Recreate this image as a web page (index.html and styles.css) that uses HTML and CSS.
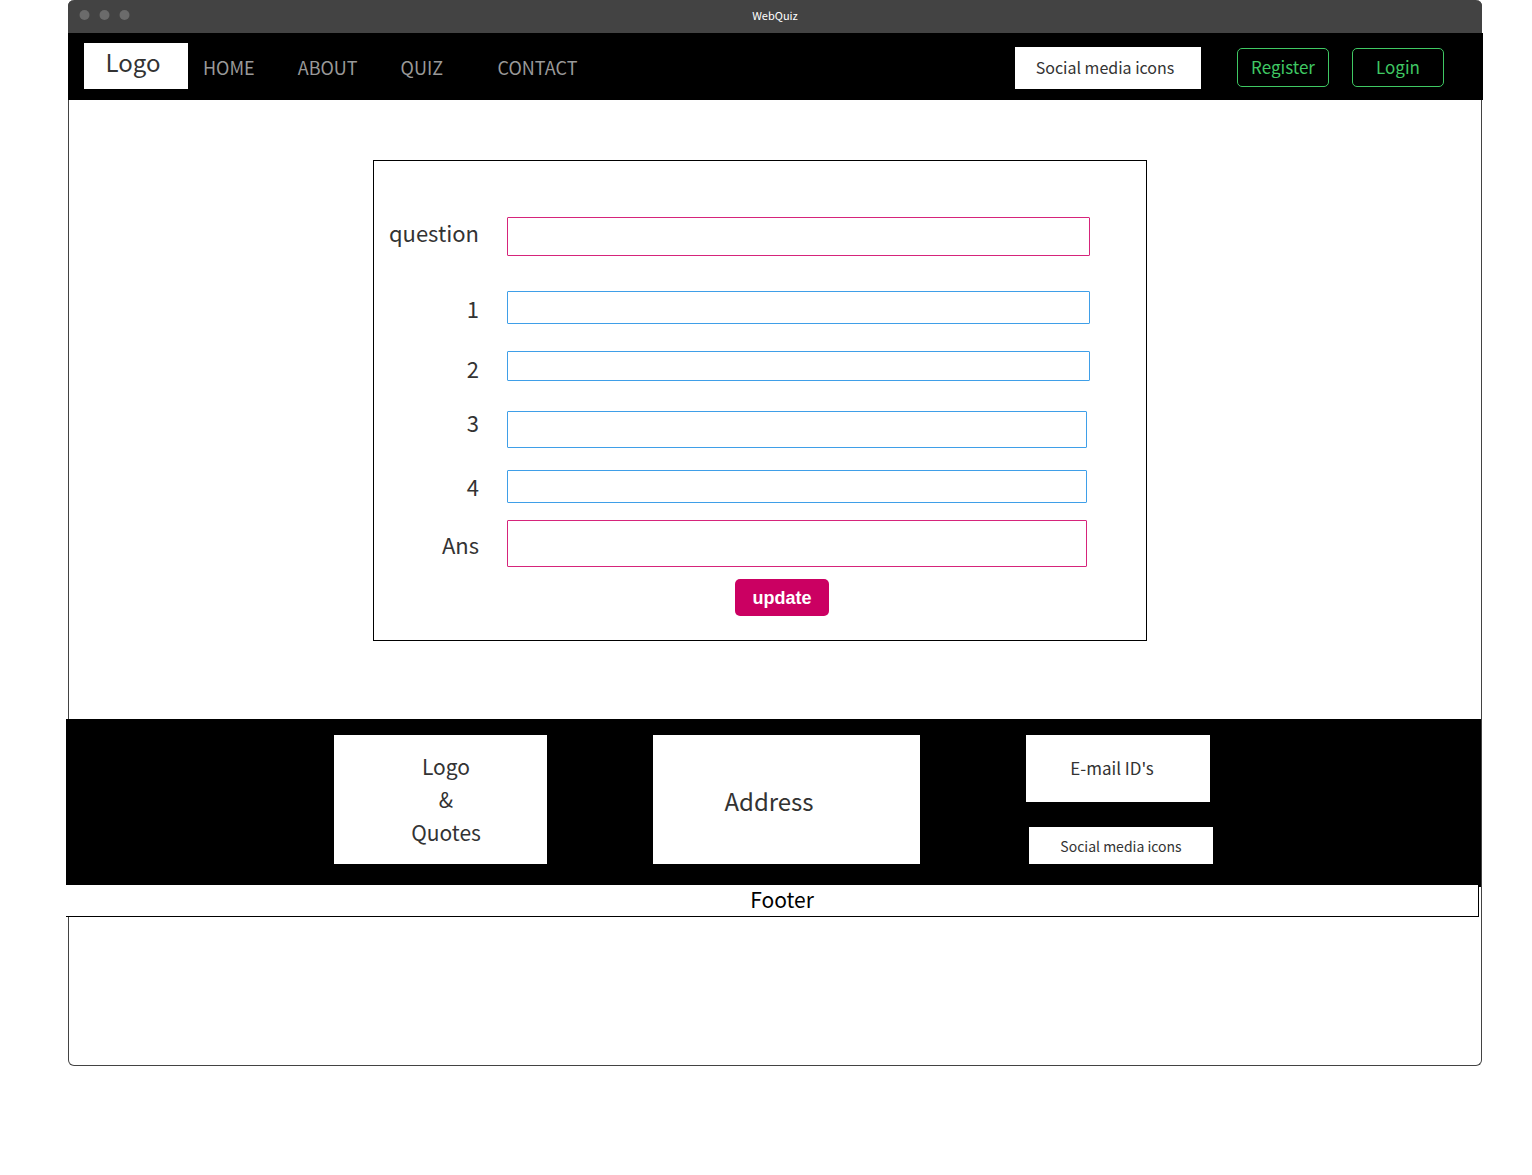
FILE: index.html
```html
<!DOCTYPE html>
<html lang="en">
<head>
  <meta charset="utf-8">
  <meta name="viewport" content="width=device-width, initial-scale=1">
  <title>WebQuiz</title>
  <link rel="stylesheet" href="styles.css">
</head>
<body>
  <div class="window">
    <div class="titlebar">
      <svg class="dots" width="52" height="12" viewBox="0 0 52 12" aria-hidden="true">
        <circle cx="6.500" cy="6" r="5"/><circle cx="26.500" cy="6" r="5"/><circle cx="46.500" cy="6" r="5"/>
      </svg>
      <span class="title">WebQuiz</span>
    </div>

    <header class="navbar">
      <a class="logo" href="#">Logo</a>
      <nav class="links">
        <a href="#">HOME</a>
        <a href="#">ABOUT</a>
        <a class="quiz" href="#">QUIZ</a>
        <a href="#">CONTACT</a>
      </nav>
      <div class="social">Social media icons</div>
      <div class="account">
        <button class="outline" type="button">Register</button>
        <button class="outline" type="button">Login</button>
      </div>
    </header>

    <main class="main">
      <form class="card">
        <div class="labels">
          <label for="question">question</label>
          <label for="option1">1</label>
          <label for="option2">2</label>
          <label for="option3">3</label>
          <label for="option4">4</label>
          <label for="answer">Ans</label>
        </div>
        <div class="fields">
          <input class="field accent" id="question" type="text">
          <input class="field" id="option1" type="text">
          <input class="field" id="option2" type="text">
          <input class="field narrow" id="option3" type="text">
          <input class="field narrow" id="option4" type="text">
          <input class="field accent narrow" id="answer" type="text">
        </div>
        <button class="update" type="submit">update</button>
      </form>
    </main>

    <footer>
      <div class="info">
        <div class="box quotes">Logo<br>&amp;<br>Quotes</div>
        <div class="box address">Address</div>
        <div class="contact">
          <div class="box email">E-mail ID's</div>
          <div class="box icons">Social media icons</div>
        </div>
      </div>
      <div class="bottom">Footer</div>
    </footer>
  </div>
</body>
</html>
```
FILE: styles.css
```css
* {
  box-sizing: border-box;
}

body {
  margin: 0;
  background: #fff;
  color: #333;
  font-family: "Noto Sans CJK SC", "Noto Sans", sans-serif;
}

a {
  color: inherit;
  text-decoration: none;
}

.window {
  margin: 0 50px 0 68px;
  padding-bottom: 148px;
  border: 1px solid #434343;
  border-top: 0;
  border-radius: 6px;
}

.titlebar {
  display: grid;
  grid-template-columns: 1fr auto 1fr;
  align-items: center;
  height: 33px;
  margin: 0 -1px;
  padding: 0 10px 3px;
  border-radius: 6px 6px 0 0;
  background: #434343;
}

.dots {
  fill: #6b6b6b;
}

.title {
  color: #fff;
  font-size: 11px;
  line-height: 16px;
}

.navbar {
  display: flex;
  align-items: center;
  height: 67px;
  margin: 0 -2px 0 -1px;
  padding: 2px 39px 0 16px;
  background: #000;
}

.logo {
  width: 104px;
  height: 46px;
  margin-bottom: 4px;
  padding-right: 6px;
  background: #fff;
  font-size: 24px;
  line-height: 38px;
  text-align: center;
}

.links {
  display: flex;
  gap: 43px;
  margin: 0 auto 2px 15px;
  color: #999;
  font-size: 18px;
  line-height: 28px;
}

.quiz {
  min-width: 54px;
}

.social {
  width: 186px;
  height: 42px;
  margin-right: 36px;
  padding-right: 6px;
  background: #fff;
  font-size: 16px;
  line-height: 40px;
  text-align: center;
}

.account {
  display: flex;
  gap: 23px;
}

.outline {
  width: 92px;
  height: 39px;
  padding: 0 0 2px;
  border: 1px solid #3fc863;
  border-radius: 5px;
  background: none;
  color: #3fc863;
  font-family: inherit;
  font-size: 17px;
  line-height: 34px;
}

.main {
  display: flex;
  justify-content: center;
  padding: 60px 30px 78px 0;
}

.card {
  display: grid;
  grid-template-columns: 105px 1fr;
  column-gap: 28px;
  width: 774px;
  padding: 56px 56px 24px 0;
  border: 1px solid #000;
}

.labels {
  display: grid;
  grid-template-rows: 76px 60px 54px 64px 58px 32px;
  justify-items: end;
  align-items: start;
  font-size: 22px;
  line-height: 30px;
}

.fields {
  display: flex;
  flex-direction: column;
}

.field {
  appearance: none;
  width: 100%;
  height: 33px;
  margin: 0 0 27px;
  padding: 0 8px;
  border: 1px solid #3f9fe8;
  border-radius: 1px;
  background: #fff;
  font: inherit;
  font-size: 18px;
}

.accent {
  border-color: #d6247b;
}

.narrow {
  width: calc(100% - 3px);
}

#question {
  height: 39px;
  margin-bottom: 35px;
}

#option2 {
  height: 30px;
  margin-bottom: 30px;
}

#option3 {
  height: 37px;
  margin-bottom: 22px;
}

#option4 {
  margin-bottom: 17px;
}

#answer {
  height: 47px;
  margin-bottom: 12px;
}

.update {
  grid-column: 2;
  justify-self: center;
  width: 94px;
  height: 37px;
  margin-right: 33px;
  padding: 2px 0 0;
  border: 0;
  border-radius: 5px;
  background: #cb0062;
  color: #fff;
  font: bold 18px "Liberation Sans", Arial, sans-serif;
}

.info {
  display: flex;
  justify-content: center;
  gap: 106px;
  height: 168px;
  margin-left: -3px;
  padding: 16px 0 23px;
  background: #000;
}

.box {
  background: #fff;
  text-align: center;
}

.quotes {
  width: 213px;
  padding: 15px 0 0 11px;
  font-size: 21px;
  line-height: 33px;
}

.address {
  width: 267px;
  padding: 46px 35px 0 0;
  font-size: 24px;
  line-height: 40px;
}

.contact {
  display: flex;
  flex-direction: column;
  justify-content: space-between;
  width: 187px;
}

.email {
  width: 184px;
  height: 67px;
  padding-right: 12px;
  font-size: 17px;
  line-height: 66px;
}

.icons {
  align-self: flex-end;
  width: 184px;
  height: 37px;
  font-size: 14px;
  line-height: 38px;
}

.bottom {
  height: 32px;
  margin: -2px 2px 0 -3px;
  padding-left: 20px;
  border: solid #000;
  border-width: 0 1px 1px 0;
  background: #fff;
  color: #000;
  font-size: 21px;
  line-height: 28px;
  text-align: center;
}
```
